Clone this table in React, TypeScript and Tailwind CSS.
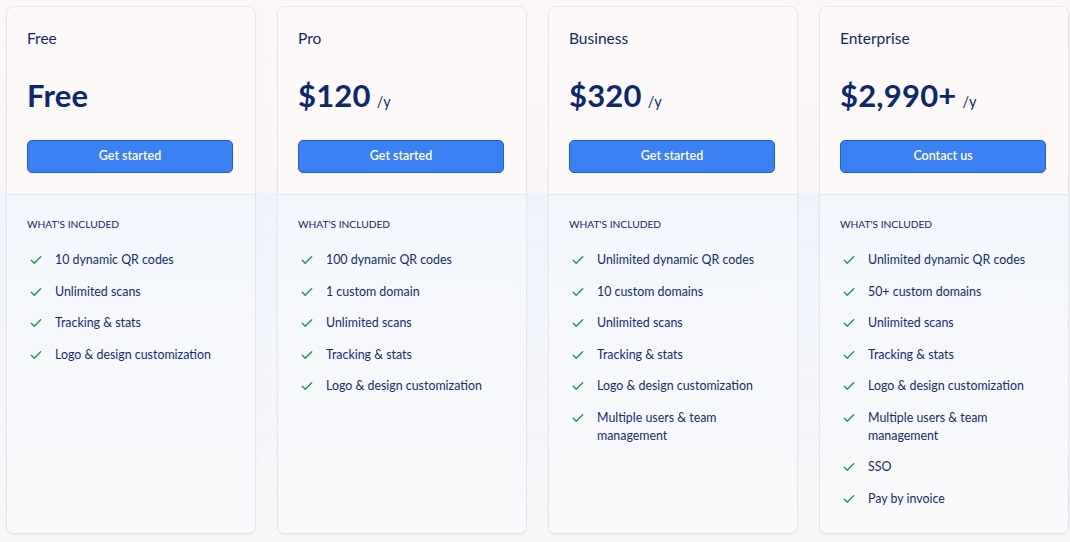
import React from "react";

type Plan = {
  name: string;
  price: string;
  per?: boolean;
  cta: string;
  features: string[];
};

const plans: Plan[] = [
  {
    name: "Free",
    price: "Free",
    cta: "Get started",
    features: ["10 dynamic QR codes", "Unlimited scans", "Tracking & stats", "Logo & design customization"],
  },
  {
    name: "Pro",
    price: "$120",
    per: true,
    cta: "Get started",
    features: ["100 dynamic QR codes", "1 custom domain", "Unlimited scans", "Tracking & stats", "Logo & design customization"],
  },
  {
    name: "Business",
    price: "$320",
    per: true,
    cta: "Get started",
    features: [
      "Unlimited dynamic QR codes",
      "10 custom domains",
      "Unlimited scans",
      "Tracking & stats",
      "Logo & design customization",
      "Multiple users & team management",
    ],
  },
  {
    name: "Enterprise",
    price: "$2,990+",
    per: true,
    cta: "Contact us",
    features: [
      "Unlimited dynamic QR codes",
      "50+ custom domains",
      "Unlimited scans",
      "Tracking & stats",
      "Logo & design customization",
      "Multiple users & team management",
      "SSO",
      "Pay by invoice",
    ],
  },
];

function Check() {
  return (
    <svg width="14" height="14" viewBox="0 0 24 24" fill="none" stroke="#16a34a" strokeWidth="2.6" strokeLinecap="round" strokeLinejoin="round" className="shrink-0 mt-[2px]">
      <path d="M4 12.5l5 5L20 6.5" />
    </svg>
  );
}

function Card({ plan }: { plan: Plan }) {
  return (
    <div className="w-[250px] shrink-0 flex flex-col rounded-[8px] border border-[#e4e4ea] overflow-hidden shadow-[0_1px_2px_rgba(0,0,0,0.06)]">
      <div className="bg-[#fdf9f9] pl-[20px] pr-[22px] pt-[19px] pb-[21px] border-b border-[#e3e4ea]">
        <div className="text-[15.5px] leading-[24px] text-[#0f2867]">{plan.name}</div>
        <div className="mt-[27px] flex items-baseline h-[36px]">
          <span className="text-[31px] leading-[36px] font-bold text-[#0e286f] tracking-[0.2px]">{plan.price}</span>
          {plan.per && <span className="ml-[6px] text-[14.5px] text-[#0f2867]">/y</span>}
        </div>
        <button className="mt-[27px] w-full h-[33px] rounded-[5px] bg-[#3a80f2] border border-[#1e5fd8] text-white text-[12.5px] font-semibold">
          {plan.cta}
        </button>
      </div>
      <div className="flex-1 bg-[linear-gradient(to_bottom,#f3f7fd,#f7f8fc_60%,#faf9fb)] px-[20px] pt-[21px]">
        <div className="text-[10.2px] leading-[16px] text-[#0f2867]">WHAT'S INCLUDED</div>
        <ul className="mt-[19px] flex flex-col gap-[13.5px]">
          {plan.features.map((f) => (
            <li key={f} className="flex gap-[12px] pl-[2px] text-[12.4px] leading-[18px] text-[#122d6b]">
              <Check />
              <span className="max-w-[178px]">{f}</span>
            </li>
          ))}
        </ul>
      </div>
    </div>
  );
}

export default function App() {
  return (
    <div
      className="w-[1070px] h-[542px] pl-[6px] pt-[6px] pb-[8px] flex gap-[21px] bg-[linear-gradient(to_bottom,#fcf6f6_0px,#fcf5f5_190px,#edf3fc_195px,#f2f5fb_330px,#f9f6f8_542px)]"
      style={{ fontFamily: "Lato, 'Liberation Sans', sans-serif" }}
    >
      {plans.map((p) => (
        <Card key={p.name} plan={p} />
      ))}
    </div>
  );
}
